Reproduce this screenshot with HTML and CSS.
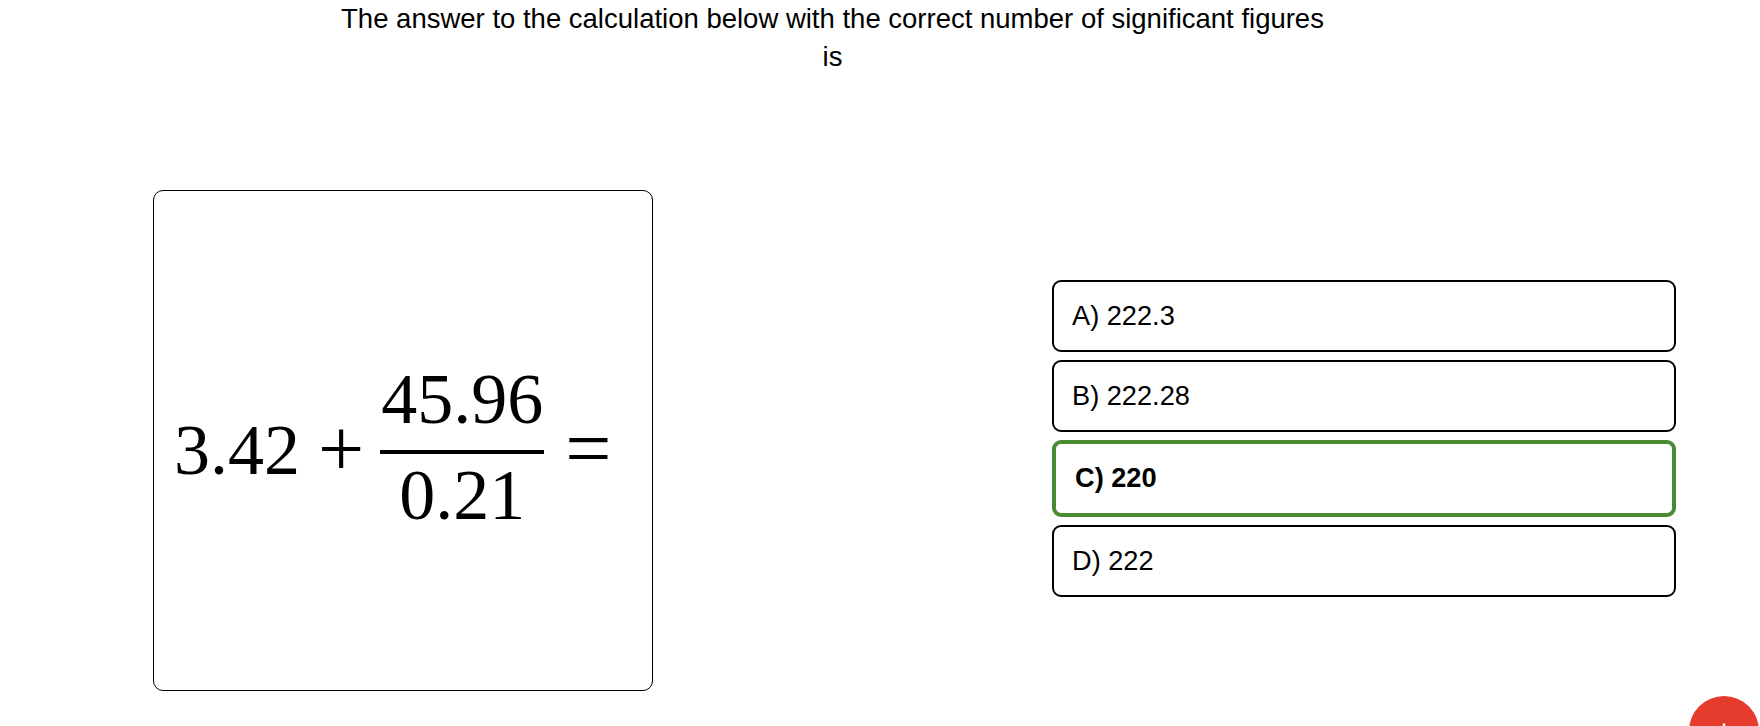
FILE: index.html
```html
<!DOCTYPE html>
<html lang="en">
<head>
<meta charset="utf-8">
<title>Significant figures</title>
<link rel="stylesheet" href="styles.css">
</head>
<body>
<div class="title">The answer to the calculation below with the correct number of significant figures is</div>
<div class="main">
  <div class="math-box">
    <div class="eq">
      <span class="num-text">3.42</span>
      <span class="op plus">+</span>
      <span class="frac">
        <span class="numer">45.96</span>
        <span class="bar"></span>
        <span class="denom">0.21</span>
      </span>
      <span class="op eqs">=</span>
    </div>
  </div>
  <div class="options">
    <div class="option">A) 222.3</div>
    <div class="option">B) 222.28</div>
    <div class="option correct">C) 220</div>
    <div class="option">D) 222</div>
  </div>
</div>
<div class="fab">+</div>
</body>
</html>
```

FILE: styles.css
```css
html, body {
  margin: 0;
  padding: 0;
  background: #fff;
}
body {
  font-family: "Liberation Sans", Arial, sans-serif;
  color: #000;
  overflow: hidden;
  height: 726px;
}
.title {
  width: 985px;
  margin-left: 340px;
  text-align: center;
  font-size: 27.5px;
  line-height: 38px;
}
.main {
  display: flex;
  align-items: center;
  margin-top: 114px;
  padding-left: 153px;
}
.math-box {
  box-sizing: border-box;
  width: 500px;
  height: 501px;
  border: 1px solid #000;
  border-radius: 10px;
  padding-left: 20px;
}
.eq {
  display: flex;
  align-items: flex-start;
  margin-top: 172px;
  font-family: "Liberation Serif", "Times New Roman", serif;
  font-size: 72px;
  line-height: 72px;
}
.num-text {
  margin-top: 51px;
}
.op {
  font-size: 82px;
  line-height: 72px;
  margin-top: 50px;
}
.plus {
  margin-left: 18px;
  margin-right: 16px;
}
.eqs {
  margin-left: 21px;
}
.frac {
  display: flex;
  flex-direction: column;
  align-items: center;
}
.numer {
  padding: 0 1px 15px;
}
.bar {
  align-self: stretch;
  height: 4px;
  background: #000;
}
.denom {
  padding-top: 5px;
}
.options {
  margin-left: 399px;
  margin-bottom: 5px;
  width: 624px;
  display: flex;
  flex-direction: column;
  gap: 8px;
}
.option {
  box-sizing: border-box;
  border: 2px solid #000;
  border-radius: 9px;
  padding: 19px 18px;
  font-size: 27.2px;
  line-height: 30px;
}
.option.correct {
  border: 4px solid #4a8a33;
  padding: 19px 17px 20px 19px;
  font-weight: bold;
}
.fab {
  position: fixed;
  right: 1px;
  bottom: -40px;
  width: 70px;
  height: 70px;
  border-radius: 50%;
  background: #e53b2c;
  color: #fff;
  font-size: 30px;
  line-height: 70px;
  text-align: center;
}
```
